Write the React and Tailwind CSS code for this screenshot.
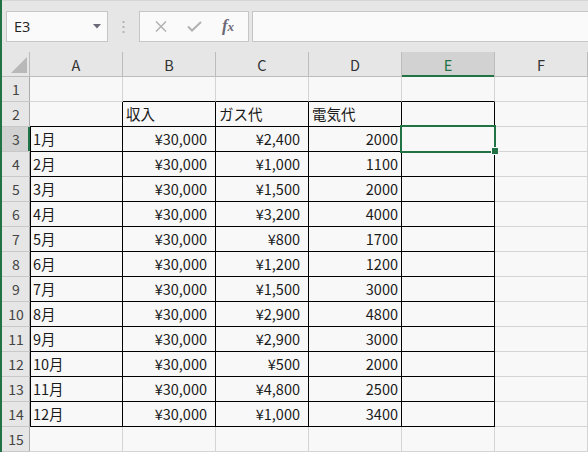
import React from "react";

const cols = ["A", "B", "C", "D", "E", "F"];
const cVals = ["¥2,400","¥1,000","¥1,500","¥3,200","¥800","¥1,200","¥1,500","¥2,900","¥2,900","¥500","¥4,800","¥1,000"];
const dVals = ["2000","1100","2000","4000","1700","1200","3000","4800","3000","2000","2500","3400"];

function inBox(r, c) {
  if (r === 2 && c >= 1 && c <= 4) return true;
  if (r >= 3 && r <= 14 && c >= 0 && c <= 4) return true;
  return false;
}

function cellContent(r, c) {
  if (r === 2) {
    if (c === 1) return { t: "収入", a: "l" };
    if (c === 2) return { t: "ガス代", a: "l" };
    if (c === 3) return { t: "電気代", a: "l" };
  }
  if (r >= 3 && r <= 14) {
    const i = r - 3;
    if (c === 0) return { t: `${i + 1}月`, a: "l" };
    if (c === 1) return { t: "¥30,000", a: "r8" };
    if (c === 2) return { t: cVals[i], a: "r8" };
    if (c === 3) return { t: dVals[i], a: "r3" };
  }
  return null;
}

function Cell({ r, c }) {
  const right = inBox(r, c) || inBox(r, c + 1) ? "border-r-[#000]" : "border-r-[#d4d4d4]";
  const bottom = inBox(r, c) || inBox(r + 1, c) ? "border-b-[#000]" : "border-b-[#d4d4d4]";
  const leftEdge = c === 0 && r >= 3 && r <= 14 ? "shadow-[inset_1px_0_0_#000]" : "";
  const content = cellContent(r, c);
  let align = "justify-start pl-[3px]";
  if (content && content.a === "r8") align = "justify-end pr-[8px]";
  if (content && content.a === "r3") align = "justify-end pr-[3px]";
  return (
    <div className={`flex items-center h-[25px] border-r border-b bg-[#f8f8f8] ${right} ${bottom} ${leftEdge} ${align} text-[14.5px] leading-none text-[#1a1a1a] whitespace-nowrap overflow-hidden`}>
      {content ? content.t : ""}
    </div>
  );
}

function RowHeader({ r }) {
  const sel = r === 3;
  return (
    <div className={`relative flex items-center justify-center h-[25px] border-b border-b-[#c8c8c8] ${sel ? "bg-[#d2d2d2]" : "bg-[#e6e6e6]"} text-[14px] text-[#444]`}>
      {r}
      <div className={`absolute top-0 bottom-0 right-0 ${sel ? "w-[2px] bg-[#217346]" : "w-[1px] bg-[#ababab]"}`} />
    </div>
  );
}

function ColHeader({ l }) {
  const sel = l === "E";
  return (
    <div className={`relative flex items-center justify-center h-[25px] border-r border-r-[#bcbcbc] ${sel ? "bg-[#d2d2d2] text-[#217346]" : "bg-[#e6e6e6] text-[#333]"} text-[14.5px]`}>
      {l}
      <div className={`absolute left-0 right-0 bottom-0 ${sel ? "h-[2px] bg-[#217346]" : "h-[1px] bg-[#bcbcbc]"}`} />
    </div>
  );
}

export default function App() {
  const rows = Array.from({ length: 15 }, (_, i) => i + 1);
  return (
    <div className="flex w-[588px] h-[452px] overflow-hidden bg-[#e6e6e6] font-['Noto_Sans_CJK_JP','Noto_Sans',sans-serif]">
      <div className="w-[2px] h-full bg-[#217346] shrink-0" />
      <div className="flex flex-col w-[586px]">
        {/* formula bar */}
        <div className="h-[52px] shrink-0 flex items-start pt-[11px] pl-[4px] border-t border-t-[#d6d6d6] bg-[#e6e6e6]">
          <div className="relative flex items-center w-[102px] h-[31px] -mt-[1px] bg-[#fafafa] border border-[#c6c6c6] pl-[7px] text-[14.5px] text-[#222] font-['Open_Sans','Noto_Sans',sans-serif]">
            E3
            <svg className="absolute right-[6px] top-[12px]" width="8" height="5" viewBox="0 0 8 5">
              <polygon points="0,0 8,0 4,4.5" fill="#6d6878" />
            </svg>
          </div>
          <div className="w-[31px] h-[30px] flex items-center justify-center">
            <svg width="3" height="12" viewBox="0 0 3 12">
              <rect x="0.5" y="0" width="2" height="2" fill="#b4b4b4" />
              <rect x="0.5" y="5" width="2" height="2" fill="#b4b4b4" />
              <rect x="0.5" y="10" width="2" height="2" fill="#b4b4b4" />
            </svg>
          </div>
          <div className="flex items-center w-[110px] h-[31px] -mt-[1px] bg-[#fafafa] border border-[#c6c6c6]">
            <div className="w-[37px] flex justify-center pl-[4px]">
              <svg width="12" height="11" viewBox="0 0 12 11">
                <path d="M1 0.5 L11 10.5 M11 0.5 L1 10.5" stroke="#b2b2b2" strokeWidth="1.5" fill="none" />
              </svg>
            </div>
            <div className="w-[34px] flex justify-center">
              <svg width="15" height="11" viewBox="0 0 15 11">
                <path d="M1 5.5 L5 9.5 L14 1" stroke="#b2b2b2" strokeWidth="2" fill="none" />
              </svg>
            </div>
            <div className="w-[34px] flex justify-center">
              <span className="font-['Liberation_Serif',serif] italic font-bold text-[17px] leading-none text-[#6d6878] -mt-[2px]">f<span className="text-[13px]">x</span></span>
            </div>
          </div>
          <div className="ml-[3px] flex-1 h-[31px] -mt-[1px] bg-[#fafafa] border border-[#c6c6c6] border-r-0" />
        </div>
        {/* grid */}
        <div className="relative grid grid-cols-[28px_repeat(6,93px)]">
          <div className="relative h-[25px] bg-[#e6e6e6]">
            <svg className="absolute right-[3px] bottom-[4px]" width="16" height="16" viewBox="0 0 16 16">
              <polygon points="16,0 16,16 0,16" fill="#b8b8b8" />
            </svg>
            <div className="absolute top-0 bottom-0 right-0 w-[1px] bg-[#bcbcbc]" />
            <div className="absolute left-0 right-0 bottom-0 h-[1px] bg-[#bcbcbc]" />
          </div>
          {cols.map((l) => (
            <ColHeader key={l} l={l} />
          ))}
          {rows.map((r) => (
            <React.Fragment key={r}>
              <RowHeader r={r} />
              {cols.map((l, c) => (
                <Cell key={l} r={r} c={c} />
              ))}
            </React.Fragment>
          ))}
          {/* selection E3 */}
          <div className="absolute left-[398px] top-[73px] w-[96px] h-[28px] border-2 border-[#217346]" />
          <div className="absolute left-[489px] top-[95px] w-[8px] h-[8px] bg-[#217346] border border-[#f8f8f8]" />
        </div>
      </div>
    </div>
  );
}
